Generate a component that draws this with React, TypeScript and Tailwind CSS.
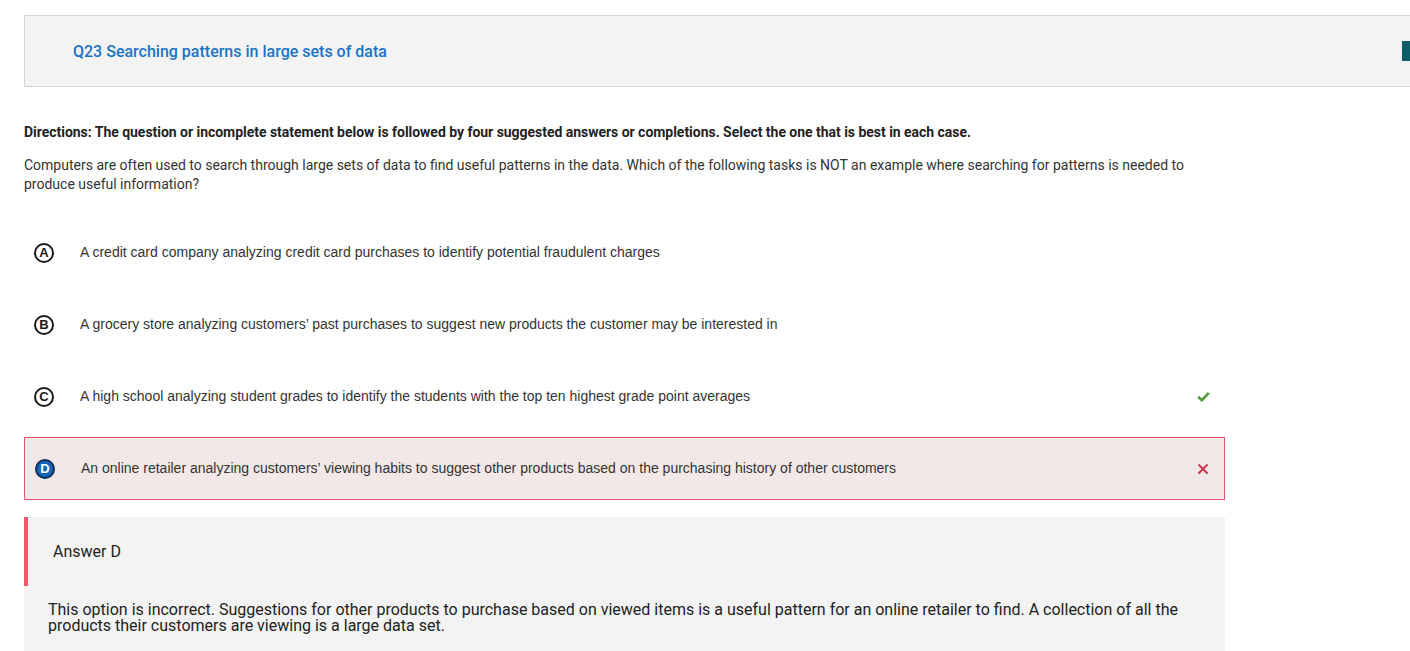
const options = [
  { letter: "A", text: "A credit card company analyzing credit card purchases to identify potential fraudulent charges", state: "none" },
  { letter: "B", text: "A grocery store analyzing customers\u2019 past purchases to suggest new products the customer may be interested in", state: "none" },
  { letter: "C", text: "A high school analyzing student grades to identify the students with the top ten highest grade point averages", state: "correct" },
  { letter: "D", text: "An online retailer analyzing customers\u2019 viewing habits to suggest other products based on the purchasing history of other customers", state: "wrong" },
];

function LetterCircle({ letter, selected }: { letter: string; selected: boolean }) {
  return (
    <span
      className={
        "flex h-[20px] w-[20px] shrink-0 items-center justify-center rounded-full border-2 text-[13px] font-bold leading-none " +
        (selected ? "border-[#0b2f55] bg-[#1565b8] text-white" : "border-[#1a1a1a] bg-white text-[#1a1a1a]")
      }
      style={{ fontFamily: "Arial, 'Liberation Sans', sans-serif" }}
    >
      {letter}
    </span>
  );
}

export default function App() {
  return (
    <div className="min-h-[651px] overflow-hidden bg-white pl-6 pt-[15px]" style={{ fontFamily: "Roboto, 'Liberation Sans', sans-serif" }}>
      {/* question header */}
      <div className="-mr-[10px] flex h-[72px] items-center justify-between border border-[#d4d4d4] bg-[#f3f3f3] pl-12">
        <h2 className="pt-[2px] text-[16px] font-medium text-[#1a73c9]">Q23 Searching patterns in large sets of data</h2>
        <div className="mr-[7px] h-[20px] w-[10px] bg-[#0b5d67]" />
      </div>

      <div className="w-[1201px]">
        <p className="mt-[36px] text-[14px] font-bold leading-[18px] tracking-[-0.03px] text-[#222]">
          Directions: The question or incomplete statement below is followed by four suggested answers or completions. Select the one that is best in each case.
        </p>
        <p className="mt-[15px] text-[14px] leading-[19px] text-[#333]">
          Computers are often used to search through large sets of data to find useful patterns in the data. Which of the following tasks is NOT an example where searching for patterns is needed to produce useful information?
        </p>

        <div className="mt-[27px] flex flex-col gap-[9px]">
          {options.map((o) => (
            <div
              key={o.letter}
              className={
                "flex h-[63px] items-center pl-[10px] pr-[15px] " +
                (o.state === "wrong" ? "border border-[#e0566c] bg-[#f3e8e8] pl-[9px]" : "")
              }
            >
              <LetterCircle letter={o.letter} selected={o.state === "wrong"} />
              <span className="ml-[26px] flex-1 text-[14px] text-[#333]" style={{ fontFamily: "Arial, 'Liberation Sans', sans-serif" }}>
                {o.text}
              </span>
              {o.state === "correct" && (
                <svg width="13" height="11" viewBox="0 0 13 11">
                  <path d="M1.2 5.8 L4.8 9.2 L11.8 1.8" fill="none" stroke="#4c9c3c" strokeWidth="2.6" />
                </svg>
              )}
              {o.state === "wrong" && (
                <svg width="12" height="12" viewBox="0 0 12 12">
                  <path d="M1.5 1.5 L10.5 10.5 M10.5 1.5 L1.5 10.5" fill="none" stroke="#c9364b" strokeWidth="2" />
                </svg>
              )}
            </div>
          ))}
        </div>

        {/* answer explanation */}
        <div className="mt-[17px] bg-[#f3f3f3] pb-[20px]">
          <div className="flex h-[69px] items-center border-l-4 border-[#e85a6c] pl-[25px]">
            <span className="text-[16px] text-[#222]">Answer D</span>
          </div>
          <p className="mt-[16px] pl-6 pr-10 text-[16px] leading-[16px] text-[#222]">
            This option is incorrect. Suggestions for other products to purchase based on viewed items is a useful pattern for an online retailer to find. A collection of all the products their customers are viewing is a large data set.
          </p>
        </div>
      </div>
    </div>
  );
}
